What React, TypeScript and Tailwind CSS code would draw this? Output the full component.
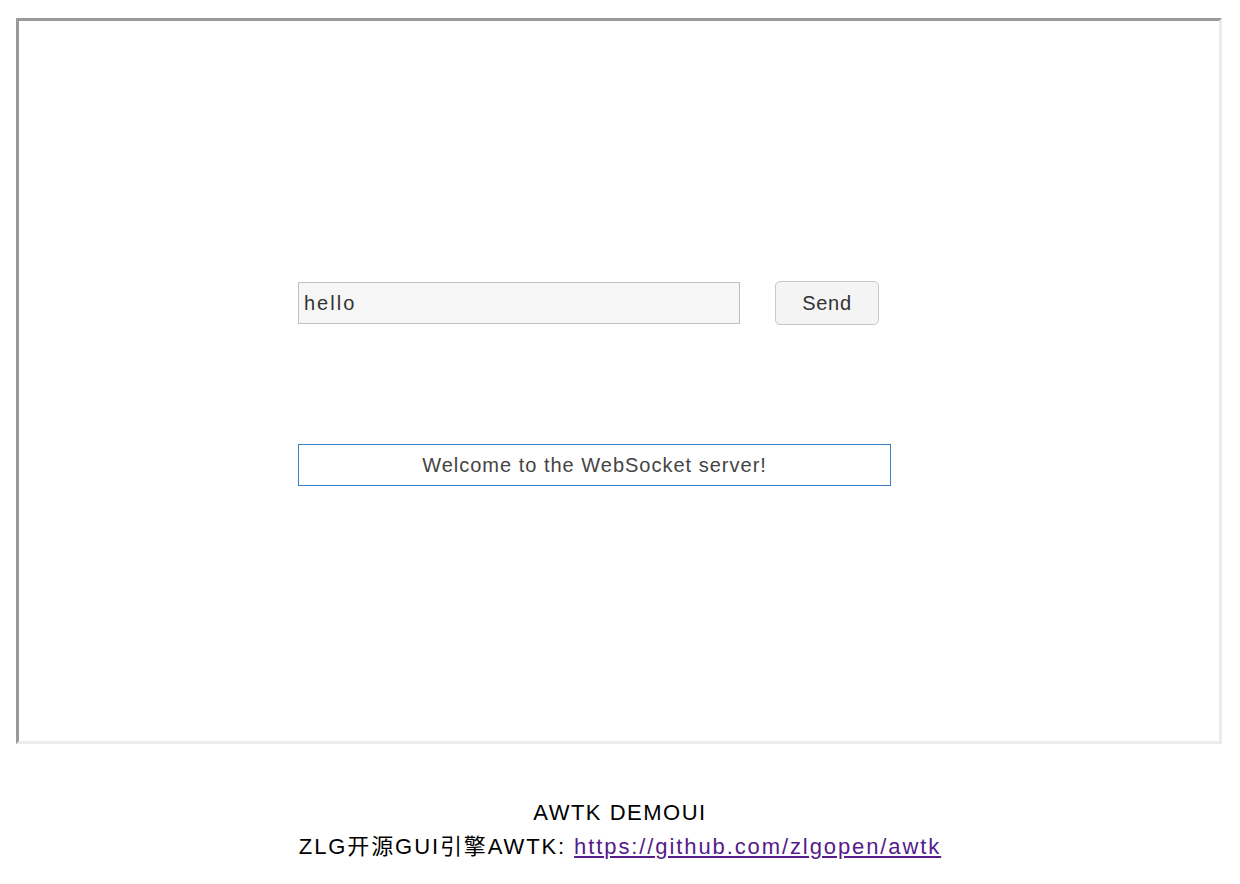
export default function App() {
    return (
        <div className="min-h-[884px] bg-white pt-[18px] font-['Liberation_Sans','Noto_Sans_CJK_SC',sans-serif]">
            <div className="mx-[16px] h-[726px] w-[1206px] border-[3px] border-b-[#ebebeb] border-l-[#9a9a9a] border-r-[#ebebeb] border-t-[#9a9a9a]">
                <div className="flex flex-col pl-[279px] pt-[260px]">
                    <div className="flex items-center">
                        <div className="flex h-[42px] w-[442px] items-center border border-[#c0c0c0] bg-[#f6f6f6] px-[5px] pb-[1px] text-[20px] tracking-[2px] text-[#333]">
                            hello
                        </div>
                        <button className="ml-[35px] flex h-[44px] w-[104px] items-center justify-center rounded-[5px] border border-[#c8c8c8] bg-[#f4f4f4] pb-[1px] text-[20px] tracking-[0.7px] text-[#333]">
                            Send
                        </button>
                    </div>
                    <div className="mt-[119px] flex h-[42px] w-[593px] items-center justify-center border-[1.5px] border-[#3a7dc9] text-[20px] tracking-[1px] text-[#444]">
                        Welcome to the WebSocket server!
                    </div>
                </div>
            </div>
            <div className="mt-[52px] text-center text-[22px] leading-[34px] text-black">
                <div className="tracking-[1.5px]">AWTK DEMOUI</div>
                <div className="tracking-[1.9px]">
                    ZLG开源GUI引擎AWTK:{' '}
                    <a href="#" className="text-[#551a8b] underline">
                        https://github.com/zlgopen/awtk
                    </a>
                </div>
            </div>
        </div>
    );
}
